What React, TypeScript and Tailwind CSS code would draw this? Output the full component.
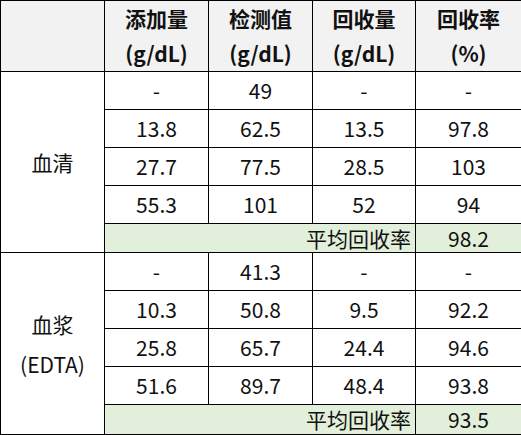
const font = { fontFamily: '"Noto Sans CJK SC", "Noto Sans", sans-serif' }

type Row = [string, string, string, string]

interface Group {
  label: string[]
  rows: Row[]
  average: string
  avgHeight: string
}

const groups: Group[] = [
  {
    label: ['血清'],
    rows: [
      ['-', '49', '-', '-'],
      ['13.8', '62.5', '13.5', '97.8'],
      ['27.7', '77.5', '28.5', '103'],
      ['55.3', '101', '52', '94'],
    ],
    average: '98.2',
    avgHeight: 'h-[29px]',
  },
  {
    label: ['血浆', '(EDTA)'],
    rows: [
      ['-', '41.3', '-', '-'],
      ['10.3', '50.8', '9.5', '92.2'],
      ['25.8', '65.7', '24.4', '94.6'],
      ['51.6', '89.7', '48.4', '93.8'],
    ],
    average: '93.5',
    avgHeight: 'h-[30px]',
  },
]

const headers = [
  ['添加量', '(g/dL)'],
  ['检测值', '(g/dL)'],
  ['回收量', '(g/dL)'],
  ['回收率', '(%)'],
]

const cell = 'border border-black p-0 text-center align-middle'

export default function App() {
  return (
    <div className="w-[521px] h-[435px] bg-white text-[#111] text-[21px]" style={font}>
      <table className="table-fixed border-collapse w-[521px]">
        <colgroup>
          <col className="w-[104px]" />
          <col className="w-[104px]" />
          <col className="w-[104px]" />
          <col className="w-[103px]" />
          <col className="w-[106px]" />
        </colgroup>
        <thead>
          <tr className="h-[70px] bg-[#f2f2f2]">
            <th className={cell} />
            {headers.map((h) => (
              <th key={h[0]} className={`${cell} font-bold text-[21px] leading-[35px]`}>
                <div>{h[0]}</div>
                <div>{h[1]}</div>
              </th>
            ))}
          </tr>
        </thead>
        <tbody>
          {groups.map((g) => (
            <>
              {g.rows.map((r, i) => (
                <tr key={g.label[0] + i} className="h-[38px]">
                  {i === 0 && (
                    <td rowSpan={5} className={`${cell} leading-[40px]`}>
                      {g.label.map((l) => (
                        <div key={l}>{l}</div>
                      ))}
                    </td>
                  )}
                  {r.map((v, j) => (
                    <td key={j} className={`${cell} leading-none`}>
                      {v}
                    </td>
                  ))}
                </tr>
              ))}
              <tr key={g.label[0] + 'avg'} className={`${g.avgHeight} bg-[#e2efda]`}>
                <td colSpan={3} className={`${cell} text-right pr-[4px] leading-none`}>
                  平均回收率
                </td>
                <td className={`${cell} leading-none`}>{g.average}</td>
              </tr>
            </>
          ))}
        </tbody>
      </table>
    </div>
  )
}
